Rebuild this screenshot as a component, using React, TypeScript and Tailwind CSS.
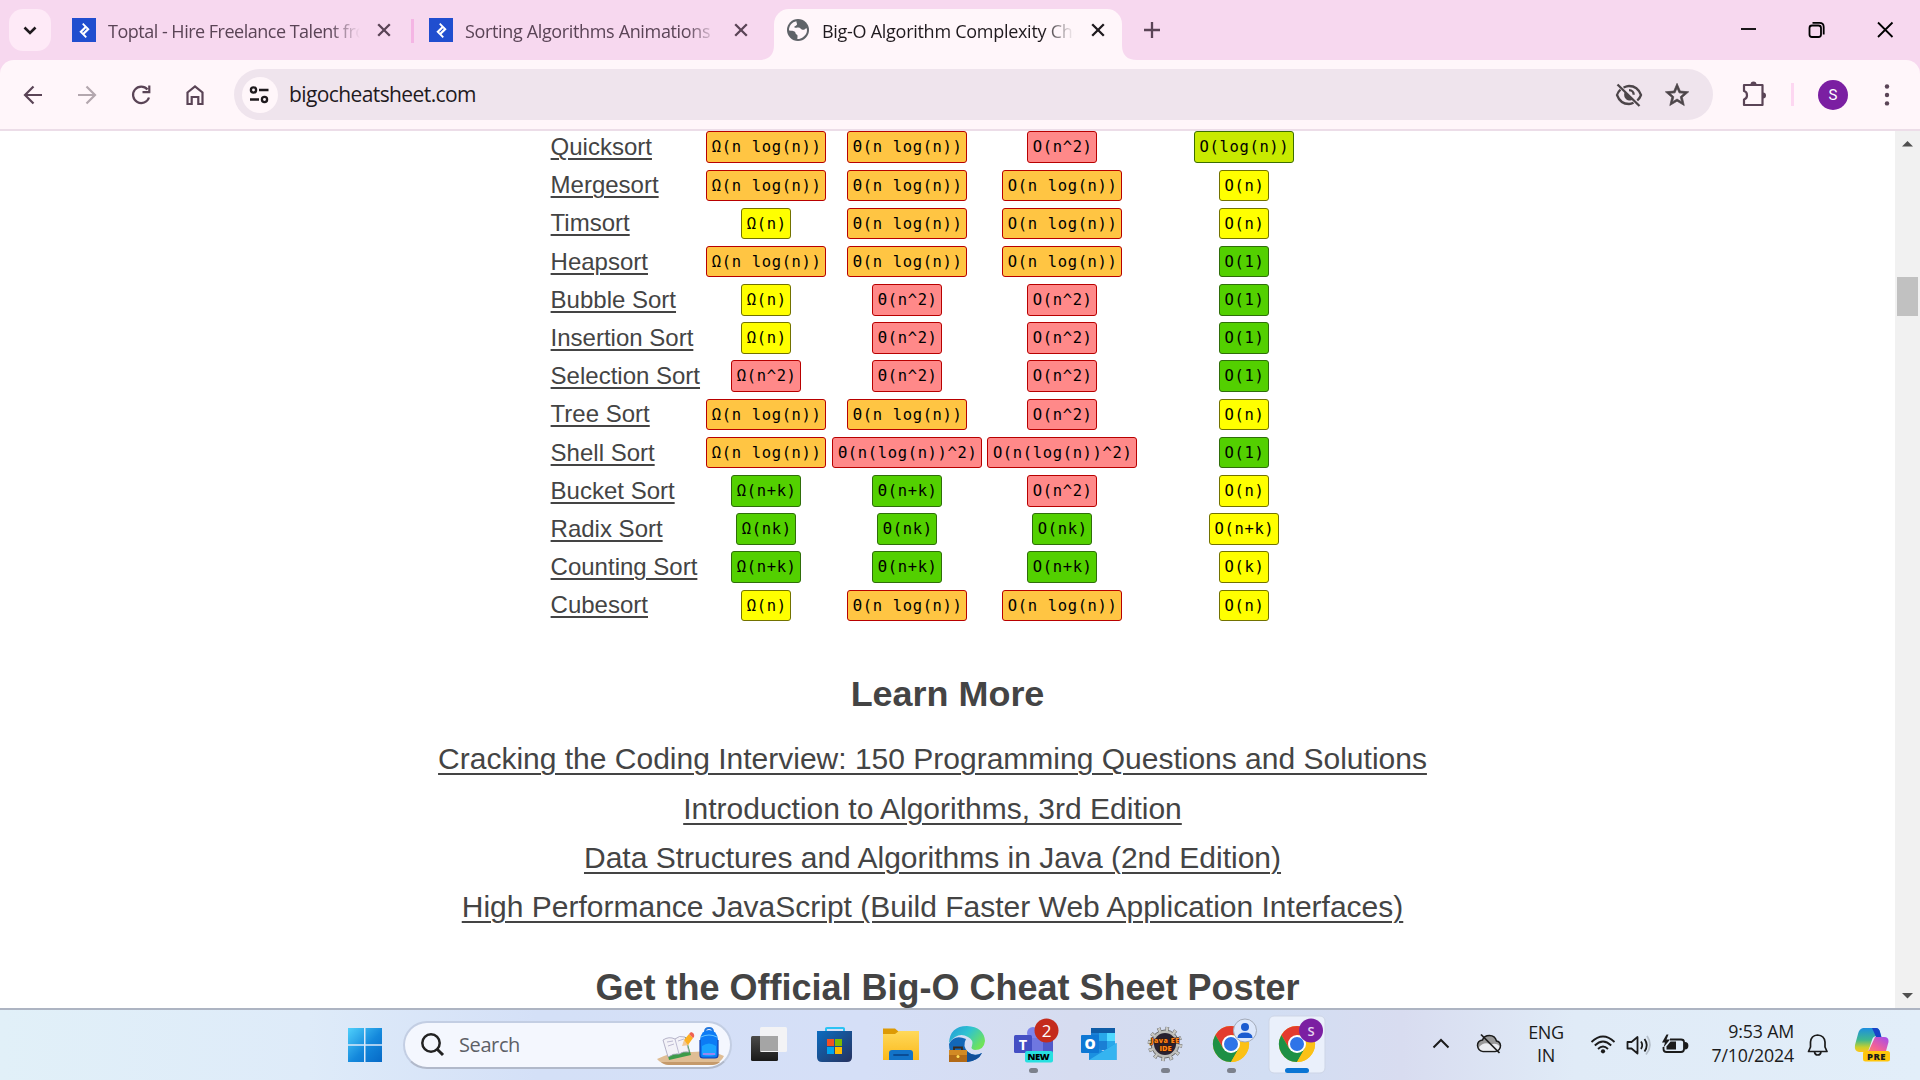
import React from "react";
import { SiToptal } from "react-icons/si";

const UI = "font-['Open_Sans','Noto_Sans',sans-serif]";

type Tone = "o" | "r" | "y" | "g" | "l";
type Cell = [string, Tone];

const TONES: Record<Tone, string> = {
  o: "bg-[#ffc543] border-[#b80000]",
  r: "bg-[#ff8989] border-[#b80000]",
  y: "bg-[#ffff00] border-[#727200]",
  g: "bg-[#53d000] border-[#2f6e0a]",
  l: "bg-[#c8ea00] border-[#3b6e00]",
};

const ROWS: { name: string; cells: Cell[] }[] = [
  { name: "Quicksort", cells: [["Ω(n log(n))", "o"], ["Θ(n log(n))", "o"], ["O(n^2)", "r"], ["O(log(n))", "l"]] },
  { name: "Mergesort", cells: [["Ω(n log(n))", "o"], ["Θ(n log(n))", "o"], ["O(n log(n))", "o"], ["O(n)", "y"]] },
  { name: "Timsort", cells: [["Ω(n)", "y"], ["Θ(n log(n))", "o"], ["O(n log(n))", "o"], ["O(n)", "y"]] },
  { name: "Heapsort", cells: [["Ω(n log(n))", "o"], ["Θ(n log(n))", "o"], ["O(n log(n))", "o"], ["O(1)", "g"]] },
  { name: "Bubble Sort", cells: [["Ω(n)", "y"], ["Θ(n^2)", "r"], ["O(n^2)", "r"], ["O(1)", "g"]] },
  { name: "Insertion Sort", cells: [["Ω(n)", "y"], ["Θ(n^2)", "r"], ["O(n^2)", "r"], ["O(1)", "g"]] },
  { name: "Selection Sort", cells: [["Ω(n^2)", "r"], ["Θ(n^2)", "r"], ["O(n^2)", "r"], ["O(1)", "g"]] },
  { name: "Tree Sort", cells: [["Ω(n log(n))", "o"], ["Θ(n log(n))", "o"], ["O(n^2)", "r"], ["O(n)", "y"]] },
  { name: "Shell Sort", cells: [["Ω(n log(n))", "o"], ["Θ(n(log(n))^2)", "r"], ["O(n(log(n))^2)", "r"], ["O(1)", "g"]] },
  { name: "Bucket Sort", cells: [["Ω(n+k)", "g"], ["Θ(n+k)", "g"], ["O(n^2)", "r"], ["O(n)", "y"]] },
  { name: "Radix Sort", cells: [["Ω(nk)", "g"], ["Θ(nk)", "g"], ["O(nk)", "g"], ["O(n+k)", "y"]] },
  { name: "Counting Sort", cells: [["Ω(n+k)", "g"], ["Θ(n+k)", "g"], ["O(n+k)", "g"], ["O(k)", "y"]] },
  { name: "Cubesort", cells: [["Ω(n)", "y"], ["Θ(n log(n))", "o"], ["O(n log(n))", "o"], ["O(n)", "y"]] },
];

const LINKS = [
  "Cracking the Coding Interview: 150 Programming Questions and Solutions",
  "Introduction to Algorithms, 3rd Edition",
  "Data Structures and Algorithms in Java (2nd Edition)",
  "High Performance JavaScript (Build Faster Web Application Interfaces)",
];

function ToptalIcon() {
  return (
    <div className="flex h-6 w-6 shrink-0 items-center justify-center bg-[#204ecf] text-white">
      <SiToptal size={15} />
    </div>
  );
}

function Globe() {
  return (
    <svg className="h-6 w-6 shrink-0" viewBox="0 0 24 24">
      <circle cx="12" cy="12" r="11" fill="#5f6368" />
      <path
        d="M10.400 3.200 C6 4 3 7.600 3 12 C3.600 13.300 7 12.600 8.500 13.400 C10 14.300 9.200 16 10.600 16.400 C12 16.800 11.500 18.600 11.300 21 C15 21.300 19 18.500 20.500 15 C21.200 12.800 21 11.500 20.700 10.200 C19 10.500 18.400 12.200 16.500 11.800 C14.500 11.400 14.700 9.600 12.300 9.500 C10 9.500 9.300 10.500 8.400 9.200 C8 7.800 10.500 7.800 11 6.400 C11.200 5.200 10.300 4.500 10.400 3.200 Z"
        fill="#fff6fa"
      />
    </svg>
  );
}

function CloseX({ color }: { color: string }) {
  return (
    <svg className="h-6 w-6 shrink-0" viewBox="0 0 24 24" fill="none" stroke={color} strokeWidth="2.300">
      <path d="M6.200 6.200 L17.800 17.800 M17.800 6.200 L6.200 17.800" />
    </svg>
  );
}

function TabStrip() {
  return (
    <div className={`flex h-[60px] w-full items-start pl-[9px] pt-[9px] ${UI}`}>
      <div className="flex h-[42px] w-[42px] items-center justify-center rounded-[14px] bg-[#feeaf7]">
        <svg width="42" height="42" viewBox="0 0 42 42" fill="none" stroke="#1f1a1e" strokeWidth="2.600">
          <path d="M15.500 18.500 L21 24 L26.500 18.500" />
        </svg>
      </div>
      <div className="ml-[21px] flex h-[42px] w-[324px] items-center">
        <ToptalIcon />
        <div className="ml-3 w-[252px] overflow-hidden whitespace-nowrap pt-[3px] text-[18px] tracking-[-0.5px] text-[#5a4456] [mask-image:linear-gradient(to_right,black_88%,transparent)]">
          Toptal - Hire Freelance Talent from the Top 3%
        </div>
        <div className="ml-3"><CloseX color="#5a4456" /></div>
      </div>
      <div className="ml-[15px] mt-[10px] h-6 w-[3px] bg-[#f4b5e4]" />
      <div className="ml-[15px] flex h-[42px] w-[324px] items-center">
        <ToptalIcon />
        <div className="ml-3 w-[252px] overflow-hidden whitespace-nowrap pt-[3px] text-[18px] tracking-[-0.35px] text-[#5a4456] [mask-image:linear-gradient(to_right,black_88%,transparent)]">
          Sorting Algorithms Animations | Toptal
        </div>
        <div className="ml-3"><CloseX color="#5a4456" /></div>
      </div>
      <svg className="ml-[6px] h-[51px] w-[15px]" viewBox="0 0 15 51"><path d="M0 51 Q15 51 15 36 V51 Z" fill="#fff6fa" /></svg>
      <div className="flex h-[51px] w-[348px] items-start rounded-t-[15px] bg-[#fff6fa] pl-3">
        <div className="flex h-[42px] items-center">
          <Globe />
          <div className="ml-3 w-[252px] overflow-hidden whitespace-nowrap pt-[3px] text-[18px] tracking-[-0.28px] text-[#1f1a1e] [mask-image:linear-gradient(to_right,black_88%,transparent)]">
            Big-O Algorithm Complexity Cheat Sheet
          </div>
          <div className="ml-3"><CloseX color="#1f1a1e" /></div>
        </div>
      </div>
      <svg className="h-[51px] w-[15px]" viewBox="0 0 15 51"><path d="M15 51 Q0 51 0 36 V51 Z" fill="#fff6fa" /></svg>
      <svg className="ml-[3px] h-[42px] w-6" viewBox="0 0 24 42" stroke="#5a4456" strokeWidth="2.300">
        <path d="M4 21 H20 M12 13 V29" />
      </svg>
      <div className="ml-auto flex h-[42px] items-center">
        <svg width="206" height="42" viewBox="0 0 206 42" fill="none" stroke="#000" strokeWidth="1.800">
          <path d="M27 20 H42" />
          <rect x="95.500" y="16.500" width="11.500" height="11.500" rx="2.500" />
          <path d="M98.500 13.800 H105.500 Q109.700 13.800 109.700 18 V25.500" />
          <path d="M164 13.500 L178.500 28 M178.500 13.500 L164 28" />
        </svg>
      </div>
    </div>
  );
}

function Toolbar() {
  return (
    <div className={`flex h-[69px] w-full items-center rounded-t-[14px] bg-[#fff6fa] pl-[15px] pr-[15px] ${UI}`}>
      <svg width="204" height="36" viewBox="0 0 204 36" fill="none" stroke="#5a4456" strokeWidth="2.200">
        <path d="M27 18 H10 M18.500 9.500 L10 18 L18.500 26.500" />
        <path d="M63 18 H80 M71.500 9.500 L80 18 L71.500 26.500" stroke="#b3a7ae" />
        <path d="M134 20.500 A8.200 8.200 0 1 1 132.500 12.500 M134.300 8.500 V15.200 H127.500" />
        <path d="M172.500 15.500 L180 9.500 L187.500 15.500 V27 H183.300 V20 H176.700 V27 H172.500 Z" />
      </svg>
      <div className="ml-[15px] flex h-[51px] w-[1479px] items-center rounded-full bg-[#efe4ed] pl-2 pr-6">
        <div className="flex h-9 w-9 items-center justify-center rounded-full bg-[#fff6fa]">
          <svg width="24" height="24" viewBox="0 0 24 24" fill="none" stroke="#1f1a1e" strokeWidth="2.300">
            <circle cx="5.500" cy="7" r="2.600" />
            <circle cx="16.500" cy="16.500" r="2.600" />
            <path d="M11 7 H20.500 M2 16.500 H11" />
          </svg>
        </div>
        <div className="ml-[11px] mt-px text-[21px] tracking-[-0.6px] text-[#1f1a1e]">bigocheatsheet.com</div>
        <svg className="ml-auto" width="30" height="30" viewBox="0 0 30 30" fill="none" stroke="#4c4549" strokeWidth="2.300">
          <path d="M9.500 7.500 C12 6.500 13.500 6 15 6 C20.500 6 25 9.500 27 15 C26.200 17.200 25 19 23.300 20.500 M19.500 22.800 C18 23.600 16.500 24 15 24 C9.500 24 5 20.500 3 15 C3.700 12.800 4.900 11.100 6.500 9.700" />
          <path d="M11 11.500 C8.500 16 12 20.500 15 20.500 C16.800 20.500 18.200 20 19.500 19 Z" fill="#4c4549" stroke="none" />
          <path d="M15 10.200 C18 10.200 19.700 12.500 19.700 14.800" />
          <path d="M3.500 4.500 L25.500 26" />
        </svg>
        <svg className="ml-[21px]" width="24" height="24" viewBox="0 0 24 24">
          <path d="M22 9.240l-7.190-.62L12 2 9.190 8.630 2 9.240l5.460 4.730L5.820 21 12 17.270 18.180 21l-1.630-7.030L22 9.240zM12 15.400l-3.760 2.270 1-4.280-3.320-2.880 4.380-.38L12 6.100l1.710 4.040 4.380.38-3.320 2.880 1 4.280L12 15.400z" fill="#4c4549" stroke="#4c4549" strokeWidth=".6" transform="translate(-2 -2) scale(1.170)" />
        </svg>
      </div>
      <svg className="ml-[26px]" width="30" height="30" viewBox="0 0 30 30">
        <path d="M5 5 H23.500 V25 H5 V19.500 C9 18.500 9 12 5 11 Z" fill="none" stroke="#5a4456" strokeWidth="2.200" strokeLinejoin="round" />
        <path d="M11.500 4.500 A3 3 0 0 1 17.500 4.500 Z M24 12.500 A3 3 0 0 1 24 18.500 Z" fill="#5a4456" />
      </svg>
      <div className="ml-[22px] h-[23px] w-[3px] bg-[#fdd7f1]" />
      <div className="ml-[24px] mt-px flex h-[30px] w-[30px] items-center justify-center rounded-full bg-[#7b1fa2] font-[Roboto,sans-serif] text-[15px] text-white">
        S
      </div>
      <svg className="ml-auto" width="36" height="30" viewBox="0 0 36 30" fill="#5a4456">
        <circle cx="18" cy="6.500" r="2.200" /><circle cx="18" cy="15" r="2.200" /><circle cx="18" cy="23.400" r="2.200" />
      </svg>
    </div>
  );
}

function Badge({ cell }: { cell: Cell }) {
  return (
    <div className="flex justify-center">
      <span
        className={`flex h-[31.500px] items-center whitespace-pre rounded-[3px] border pl-[4.500px] pr-[3.500px] pt-[2px] font-['DejaVu_Sans_Mono',monospace] text-[15.500px] leading-none tracking-[0.640px] text-black ${TONES[cell[1]]}`}
      >
        {cell[0]}
      </span>
    </div>
  );
}

function Page() {
  return (
    <div className="flex h-[877px] w-full overflow-hidden bg-white">
      <main className="w-[1895px] font-['Liberation_Sans',Arial,sans-serif] text-[#444]">
        <div className="-mt-[3px] pl-[550.600px]">
          {ROWS.map((r) => (
            <div key={r.name} className="grid h-[38.190px] grid-cols-[152.600px_126px_156px_154px_209.500px] items-center">
              <a className="whitespace-nowrap text-[24px] leading-[28px] underline decoration-2 underline-offset-[3px]">{r.name}</a>
              {r.cells.map((c, i) => (
                <Badge key={i} cell={c} />
              ))}
            </div>
          ))}
        </div>
        <h2 className="mt-[47.200px] text-center text-[35.950px] font-bold leading-[44px]">Learn More</h2>
        <div className="mt-[18.500px] flex flex-col items-center pr-[30px]">
          {LINKS.map((t) => (
            <a key={t} className="whitespace-nowrap text-[30px] leading-[49.400px] underline decoration-2 underline-offset-[4px]">{t}</a>
          ))}
        </div>
        <h2 className="mt-[34.500px] text-center text-[36px] font-bold leading-[44px]">Get the Official Big-O Cheat Sheet Poster</h2>
      </main>
      <div className="flex w-[25px] flex-col items-center bg-[#f1f1f1]">
        <svg width="25" height="26" viewBox="0 0 25 26"><path d="M7 15.500 L12.500 10 L18 15.500 Z" fill="#505050" /></svg>
        <div className="mt-[120px] h-[39px] w-[21px] bg-[#c1c1c1]" />
        <svg className="mt-auto" width="25" height="26" viewBox="0 0 25 26"><path d="M7 11 H18 L12.500 16.500 Z" fill="#505050" /></svg>
      </div>
    </div>
  );
}

function ChromeLogo() {
  return (
    <g>
      <circle cx="33" cy="33" r="18" fill="#fbc116" />
      <path d="M33 24 H48.600 A18 18 0 0 0 17.400 24 L25.200 37.500 Z" fill="#e33b2e" />
      <path d="M17.400 24 A18 18 0 0 0 33 51 L40.800 37.500 L25.200 37.500 Z" fill="#1e9045" />
      <path d="M33 51 A18 18 0 0 0 48.600 24 H33 L40.800 37.500 Z" fill="#fbc116" />
      <circle cx="33" cy="33" r="9" fill="#fff" />
      <circle cx="33" cy="33" r="7" fill="#2f74e8" />
    </g>
  );
}

function Slot({ children }: { children: React.ReactNode }) {
  return (
    <svg className="h-[70px] w-[66px] shrink-0" viewBox="0 0 66 70">
      {children}
    </svg>
  );
}

function Taskbar() {
  return (
    <div className={`flex h-[72px] w-full items-center border-t-2 border-[#adb4c2] bg-[linear-gradient(to_right,#e1f0f8_0%,#deebf9_16%,#d4e0f7_28%,#d5dff7_45%,#d6dcf0_56%,#d2def3_66%,#d8dcf0_73%,#e0ebf7_82%,#e2eef9_100%)] ${UI}`}>
      <svg className="ml-[347px] h-9 w-9" viewBox="0 0 36 36">
        <defs>
          <linearGradient id="win" x1="0" y1="0" x2="1" y2="1">
            <stop offset="0" stopColor="#4fd0fb" /><stop offset=".55" stopColor="#1488dc" /><stop offset="1" stopColor="#0669c6" />
          </linearGradient>
        </defs>
        <path d="M1 1 H17 V17.300 H1 Z M18.500 1 H35 V17.300 H18.500 Z M1 18.700 H17 V35 H1 Z M18.500 18.700 H35 V35 H18.500 Z" fill="url(#win)" />
      </svg>
      <div className="ml-5 mb-[1px] flex h-[48px] w-[329px] items-center overflow-hidden rounded-full border-2 border-[#c3cee3] border-b-[#b1b9ca] bg-[#f4f7fe]">
        <svg className="ml-[15px]" width="26" height="26" viewBox="0 0 26 26" fill="none" stroke="#222" strokeWidth="2.500">
          <circle cx="11" cy="11" r="8.700" /><path d="M17.200 17.200 L23 23" strokeWidth="3" />
        </svg>
        <div className="ml-[13px] text-[20px] tracking-[-0.4px] text-[#5d6066]">Search</div>
        <svg className="ml-auto mr-[3px]" width="70" height="44" viewBox="0 0 70 44">
          <path d="M0 36 Q18 27 35 29 Q55 27 67 33 Q64 40 55 42 H12 Q4 41 0 36 Z" fill="#dfbd94" />
          <path d="M4 39 H63 Q60 42 55 42 H12 Q7 42 4 39 Z" fill="#c59a6b" />
          <path d="M7 18 L29 14 L34 32 L12 37 Z" fill="#3c9b49" />
          <path d="M6 17 Q12 13 18 16 Q22 12 28 14 L32 29 Q26 28 22 31 Q17 30 11 34 Z" fill="#f3f2f8" stroke="#a6a3bd" strokeWidth=".8" />
          <path d="M18 16 L22 31 M10 19 L16 18 M11 23 L17 21 M21 18 L27 16" stroke="#b7b3cd" strokeWidth=".9" />
          <path d="M25 23 L27 17 L32 22 Z" fill="#f2c795" />
          <path d="M27 17 L32 11 L36 15 L31 22 Z" fill="#fdb022" />
          <path d="M32 11 L34 9 Q38 10 37 14 L36 15 Z" fill="#ef6153" />
          <path d="M48 9 Q48 5 52 5 Q56 5 56 9" fill="none" stroke="#2477dc" strokeWidth="2" />
          <path d="M43 17 Q44 7 52 7 Q60 7 61 17 V32 Q61 35 58 35 H46 Q43 35 43 32 Z" fill="#0c7bf5" />
          <path d="M45 23 Q52 18 59 23 V32 Q52 34 45 32 Z" fill="#1ba3ff" />
          <path d="M44 14 Q52 10 60 14" fill="none" stroke="#63c4ff" />
          <path d="M46 31 H58" stroke="#9a86f0" strokeWidth="2" />
          <path d="M43 17 V32 Q43 35 46 35 H58 Q61 35 61 32 V17" fill="none" stroke="#123fae" strokeWidth="1.200" />
        </svg>
      </div>
      <div className="ml-1 flex">
        <Slot>
          <defs>
            <linearGradient id="tv" x1="0" y1="0" x2="0" y2="1"><stop offset="0" stopColor="#4a4a4a" /><stop offset="1" stopColor="#191919" /></linearGradient>
          </defs>
          <rect x="15" y="26" width="27" height="25" rx="1.500" fill="url(#tv)" />
          <rect x="24" y="17" width="27" height="25" rx="1.500" fill="#f3f3f5" />
          <path d="M24 26 H42 V41 H24 Z" fill="#a5a5a5" />
        </Slot>
        <Slot>
          <defs>
            <linearGradient id="st" x1="0" y1="0" x2="1" y2="1"><stop offset="0" stopColor="#0b6cc0" /><stop offset="1" stopColor="#27325f" /></linearGradient>
          </defs>
          <path d="M24 22 V18.500 Q24 18 25 18 H41 Q42 18 42 18.500 V22" fill="none" stroke="#2cc3f4" strokeWidth="2" />
          <path d="M15 21 H50 V47 Q50 52 45 52 H20 Q15 52 15 47 Z" fill="url(#st)" />
          <path d="M25 29 h7 v7 h-7z" fill="#f25022" /><path d="M33 29 h7 v7 h-7z" fill="#7fba00" />
          <path d="M25 37 h7 v7 h-7z" fill="#00a4ef" /><path d="M33 37 h7 v7 h-7z" fill="#ffb900" />
        </Slot>
        <Slot>
          <defs>
            <linearGradient id="fe" x1="0" y1="0" x2="0" y2="1"><stop offset="0" stopColor="#ffd95a" /><stop offset="1" stopColor="#fbb91c" /></linearGradient>
          </defs>
          <path d="M15 18.500 H27 L31 22 V26 L15 28 Z" fill="#dd9a05" />
          <path d="M15 24 H27 L31 21 H51 V50 H15 Z" fill="url(#fe)" />
          <path d="M21 50 V43 Q21 40 24 40 H42 Q45 40 45 43 V50 Z" fill="#1273c8" />
          <path d="M26 45 H40" stroke="#0a4c94" strokeWidth="1.800" strokeLinecap="round" />
        </Slot>
        <Slot>
          <defs>
            <linearGradient id="ed" x1="0" y1="0" x2="1" y2=".6"><stop offset="0" stopColor="#2398d8" /><stop offset=".5" stopColor="#2fc3d0" /><stop offset="1" stopColor="#6fe35a" /></linearGradient>
          </defs>
          <path d="M15 34 Q15 51 33 52 Q44 51 48 43 Q40 47 34 42 Q28 36 32 29 Q20 24 15 34 Z" fill="#1267b8" />
          <path d="M34 42 Q40 48 48 43 Q44 51 33 52 Q27 47 29 38 Z" fill="#11509a" />
          <path d="M15 33 Q16 16 33 16 Q50 17 51 31 Q50 40 41 40 Q36 39 38 36 Q40 30 34 27 Q24 21 15 33 Z" fill="url(#ed)" />
          <path d="M20 40 V37.500 H28 V40" fill="none" stroke="#3a2a1c" strokeWidth="1.800" />
          <rect x="15" y="40" width="18" height="12" fill="#b26a17" />
          <rect x="15" y="40" width="18" height="5" fill="#d28a24" />
          <circle cx="24" cy="46.500" r="1.500" fill="#ffe15a" />
        </Slot>
        <Slot>
          <circle cx="33" cy="23" r="6" fill="#7b83eb" />
          <path d="M29 28 H50 V45 Q48 52 40 52 Q30 52 29 43 Z" fill="#6f77e0" />
          <path d="M43 29 H53 V44 H43 Z" fill="#5059c9" />
          <rect x="14" y="25" width="18" height="18" rx="1.500" fill="#444fc4" />
          <text x="23" y="39.500" textAnchor="middle" fontSize="14.500" fontWeight="700" fill="#fff">T</text>
          <rect x="25" y="41" width="28" height="11.500" rx="2" fill="#27e0e0" />
          <text x="38.500" y="50.300" textAnchor="middle" fontSize="9.500" fontWeight="800" fill="#000" textLength="22">NEW</text>
          <circle cx="46.500" cy="20.500" r="12" fill="#c42b1c" />
          <text x="46.500" y="26.500" textAnchor="middle" fontSize="17" fill="#fff">2</text>
          <rect x="29" y="58" width="9" height="5" rx="2.500" fill="#7c818c" />
        </Slot>
        <Slot>
          <path d="M25 18 H49 V40 H25 Z" fill="#1a7fd4" />
          <path d="M25 18 H49 V23 H25 Z" fill="#0f5ca6" />
          <path d="M33 23 H41 V31 H33 Z" fill="#28a8ea" /><path d="M41 23 H49 V31 H41 Z" fill="#50d9ff" /><path d="M41 31 H49 V39 H41 Z" fill="#28a8ea" />
          <path d="M23 33 L37 41 L50.500 33 V50 H23 Z" fill="#1b90e0" />
          <path d="M23 50 L50.500 33 V50 Z" fill="#35b4f0" />
          <rect x="15" y="25" width="18" height="18" rx="1" fill="#0f78d4" />
          <text x="24" y="39.300" textAnchor="middle" fontSize="14" fontWeight="800" fill="#fff">O</text>
        </Slot>
        <Slot>
          <circle cx="33" cy="34" r="15" fill="none" stroke="#6c6c6c" strokeWidth="4.600" strokeDasharray="3.400 4.454" />
          <circle cx="33" cy="34" r="14" fill="#bcbcb8" stroke="#6c6c6c" />
          <circle cx="33" cy="34" r="15" fill="none" stroke="#c9c9c4" strokeWidth="4" strokeDasharray="2.400 5.454" strokeDashoffset="-.5" />
          <circle cx="33" cy="34" r="11" fill="#282130" />
          <text x="33" y="32.500" textAnchor="middle" fontSize="7" fontWeight="800" stroke="#3d1500" strokeWidth="1.200" paintOrder="stroke" fill="#ff8418" textLength="28">Java EE</text>
          <text x="33.500" y="40.500" textAnchor="middle" fontSize="7.500" fontWeight="800" stroke="#3d1500" strokeWidth="1.200" paintOrder="stroke" fill="#ff8418">IDE</text>
          <rect x="29" y="58" width="9" height="5" rx="2.500" fill="#7c818c" />
        </Slot>
        <Slot>
          <g transform="translate(0 1)"><ChromeLogo /></g>
          <circle cx="47" cy="20.500" r="11.500" fill="#dce7fb" stroke="#a4abb8" />
          <circle cx="47" cy="17" r="4" fill="#1a5bd0" />
          <path d="M39.500 28 Q39.500 22.500 47 22.500 Q54.500 22.500 54.500 28 Z" fill="#1a5bd0" />
          <rect x="29" y="58" width="9" height="5" rx="2.500" fill="#7c818c" />
        </Slot>
        <Slot>
          <rect x="5" y="6" width="56" height="57" rx="5" fill="#eaf0fb" stroke="#cdd5e6" />
          <g transform="translate(0 1)"><ChromeLogo /></g>
          <circle cx="47" cy="20.500" r="12" fill="#7b1fa2" />
          <text x="47" y="25.500" textAnchor="middle" fontSize="13" fontWeight="600" fill="#e6d3ee">S</text>
          <rect x="21" y="58" width="24" height="5" rx="2.500" fill="#0a75d4" />
        </Slot>
      </div>
      <svg className="ml-[98px]" width="80" height="40" viewBox="0 0 80 40" fill="none" stroke="#1b1b1b" strokeWidth="2">
        <path d="M5.500 22.500 L13 15 L20.500 22.500" />
        <path d="M55 26.500 H67 Q72.500 25.500 72.500 20.500 Q72 16.500 68.500 16 Q67 10.500 61.500 10.500 Q56 10.500 54.500 15 Q49.500 15.800 49.500 20.500 Q50 26 55 26.500 Z" fill="#999" strokeWidth="1.500" />
        <path d="M51 22 Q56 16 63 19.500 Q68 17.500 71.500 21 Q71 25.500 67 25.700 H55 Q51.500 25 51 22 Z" fill="#eceef2" stroke="none" />
        <path d="M53 9.500 L71.500 28" strokeWidth="1.700" />
      </svg>
      <div className="mb-[2px] ml-[10px] w-[56px] text-center text-[18px] leading-[23px] tracking-[-0.3px] text-[#1b1b1b]">
        <div>ENG</div>
        <div>IN</div>
      </div>
      <svg className="ml-[14px]" width="104" height="36" viewBox="0 0 104 36" fill="none" stroke="#1b1b1b" strokeWidth="1.800">
        <path d="M3.500 15 Q15 4 26.500 15" /><path d="M6.800 18.500 Q15 10.500 23.200 18.500" /><path d="M10 22 Q15 17 20 22" />
        <circle cx="15" cy="24.300" r="2.100" fill="#1b1b1b" stroke="none" />
        <path d="M39.500 15 H43.500 L49.500 10 V26.500 L43.500 21.500 H39.500 Z" strokeLinejoin="round" />
        <path d="M53 14.500 Q55.500 18.200 53 22" /><path d="M56.500 12 Q61 18.200 56.500 24.500" /><path d="M59 9 Q65.500 18.200 58 27.500" stroke="#b5bfca" />
        <path d="M82 12.500 H93 Q96 12.500 96 15 V22 Q96 25 93 25 H78.500 Q75.500 25 75.500 22 V20" />
        <path d="M97 16 Q99.500 16 99.500 18.700 Q99.500 21.500 97 21.500 Z" fill="#1b1b1b" />
        <path d="M82.500 14.500 H88 V22.500 H78.500 V19.500 Z" fill="#1b1b1b" stroke="none" />
        <path d="M78.500 7.500 L74 15.500 H77 L75.500 20.500 L82 12.500 H78.500 L80.500 7.500 Z" fill="#1b1b1b" stroke="none" />
      </svg>
      <div className="mb-[4px] ml-auto w-[100px] text-right text-[17.800px] leading-[24px] tracking-[-0.2px] text-[#1b1b1b]">
        <div>9:53 AM</div>
        <div>7/10/2024</div>
      </div>
      <svg className="ml-3" width="24" height="28" viewBox="0 0 24 28" fill="none" stroke="#1b1b1b" strokeWidth="1.700">
        <path d="M2.500 20.500 L4.500 16 V11 Q5 4.500 11.500 4 Q18.500 4.500 19 11 V16 L21 20.500 Z" strokeLinejoin="round" />
        <path d="M8.500 21 Q9 24 11.700 24 Q14.500 24 15 21" />
      </svg>
      <svg className="ml-[20px] mr-[24px]" width="46" height="44" viewBox="0 0 46 44">
        <defs>
          <linearGradient id="ca" x1="0" y1="0" x2="0" y2="1"><stop offset="0" stopColor="#1d8fe0" /><stop offset=".5" stopColor="#3fb98e" /><stop offset=".8" stopColor="#c9cf2d" /><stop offset="1" stopColor="#ffc61a" /></linearGradient>
          <linearGradient id="cb" x1="1" y1="0" x2="0" y2="1"><stop offset="0" stopColor="#a04bf0" /><stop offset=".6" stopColor="#f0609a" /><stop offset="1" stopColor="#ff8a5a" /></linearGradient>
        </defs>
        <path d="M13 5 H26 Q29 5 30 9 L31 13 H27 Q23 13 22 17 L19 26 Q18 29 14 29 H9 Q4 28 5 22 L8 11 Q9 6 13 5 Z" fill="url(#ca)" />
        <path d="M22 5 H26 Q29 5 30 9 L31.500 14 H26 Q24 9 22 5 Z" fill="#1843c8" />
        <path d="M25 14 H34 Q39 14 38.500 19 L36 28 H14 Q19 29 20 25 Z" fill="url(#cb)" />
        <rect x="13" y="28" width="27" height="10.500" rx="2.500" fill="#ffc60b" />
        <text x="26.500" y="36.700" textAnchor="middle" fontSize="9.500" fontWeight="800" fill="#1b1b1b" letterSpacing=".4">PRE</text>
      </svg>
    </div>
  );
}

export default function App() {
  return (
    <div className="flex h-[1080px] w-[1920px] flex-col overflow-hidden bg-[#f7d8ef]">
      <TabStrip />
      <Toolbar />
      <div className="h-0.5 w-full bg-[#ecdde8]" />
      <Page />
      <Taskbar />
    </div>
  );
}
